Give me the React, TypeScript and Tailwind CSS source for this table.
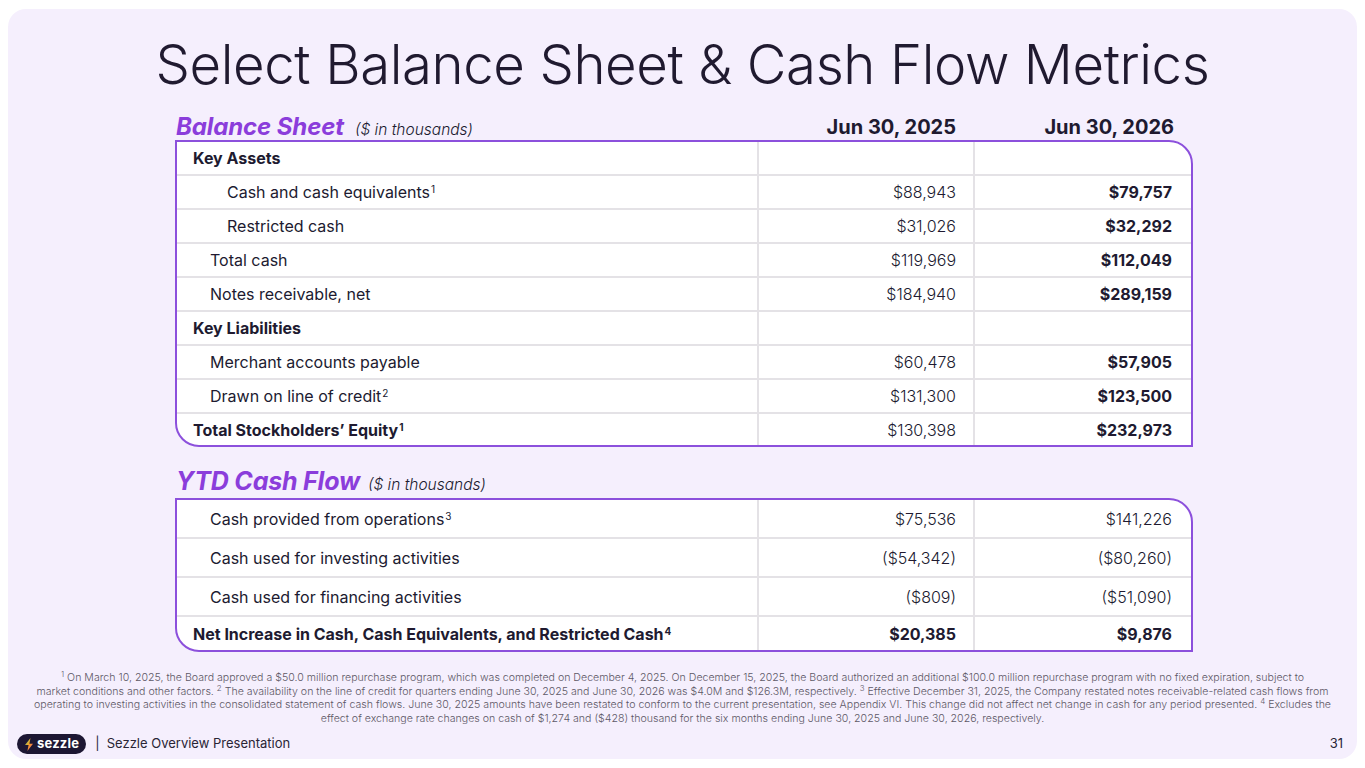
import React from "react";

type Row = {
  label: string;
  sup?: string;
  a: string;
  b: string;
  indent?: 0 | 1 | 2;
  bold?: boolean;
  boldA?: boolean;
  boldB?: boolean;
};

const balanceRows: Row[] = [
  { label: "Key Assets", a: "", b: "", indent: 0, bold: true },
  { label: "Cash and cash equivalents", sup: "1", a: "$88,943", b: "$79,757", indent: 2, boldB: true },
  { label: "Restricted cash", a: "$31,026", b: "$32,292", indent: 2, boldB: true },
  { label: "Total cash", a: "$119,969", b: "$112,049", indent: 1, boldB: true },
  { label: "Notes receivable, net", a: "$184,940", b: "$289,159", indent: 1, boldB: true },
  { label: "Key Liabilities", a: "", b: "", indent: 0, bold: true },
  { label: "Merchant accounts payable", a: "$60,478", b: "$57,905", indent: 1, boldB: true },
  { label: "Drawn on line of credit", sup: "2", a: "$131,300", b: "$123,500", indent: 1, boldB: true },
  { label: "Total Stockholders\u2019 Equity", sup: "1", a: "$130,398", b: "$232,973", indent: 0, bold: true, boldB: true },
];

const cashRows: Row[] = [
  { label: "Cash provided from operations", sup: "3", a: "$75,536", b: "$141,226", indent: 1 },
  { label: "Cash used for investing activities", a: "($54,342)", b: "($80,260)", indent: 1 },
  { label: "Cash used for financing activities", a: "($809)", b: "($51,090)", indent: 1 },
  { label: "Net Increase in Cash, Cash Equivalents, and Restricted Cash", sup: "4", a: "$20,385", b: "$9,876", indent: 0, bold: true, boldA: true, boldB: true },
];

function TableRow({ row, last, h }: { row: Row; last: boolean; h: string }) {
  const pad = row.indent === 2 ? "pl-[50px]" : row.indent === 1 ? "pl-[33px]" : "pl-[16px]";
  return (
    <div className={`grid grid-cols-[582px_216px_1fr] ${h} ${last ? "" : "border-b-2 border-[#e4e2e6]"}`}>
      <div className={`flex items-center ${pad} border-r-2 border-[#e4e2e6] ${row.bold ? "font-bold" : "font-normal"}`}>
        <span>
          {row.label}
          {row.sup && <sup className="text-[10px] leading-none ml-[1px]">{row.sup}</sup>}
        </span>
      </div>
      <div className={`flex items-center justify-end pr-[17px] border-r-2 border-[#e4e2e6] ${row.boldA ? "font-bold" : "font-light"}`}>
        {row.a}
      </div>
      <div className={`flex items-center justify-end pr-[19px] ${row.boldB ? "font-bold" : "font-light"}`}>
        {row.b}
      </div>
    </div>
  );
}

function SezzleLogo() {
  return (
    <div className="flex items-center gap-[3px] h-[20px] px-[7px] rounded-full bg-[#1d1733]">
      <svg width="10" height="13" viewBox="0 0 10 13">
        <defs>
          <linearGradient id="bolt" x1="0" y1="0" x2="1" y2="1">
            <stop offset="0" stopColor="#3ad6a8" />
            <stop offset="0.45" stopColor="#f5a623" />
            <stop offset="1" stopColor="#f0507a" />
          </linearGradient>
        </defs>
        <path d="M6.5 0 L1 7 L4.6 7 L3.4 13 L9 5.8 L5.4 5.8 Z" fill="url(#bolt)" />
      </svg>
      <span className="text-white text-[13px] font-bold leading-none tracking-[0.2px] -mt-[2px]">sezzle</span>
    </div>
  );
}

export default function App() {
  return (
    <div
      className="w-[1365px] h-[768px] bg-white py-[9px] px-[8px] text-[#201a30]"
      style={{ fontFamily: "Inter, 'Liberation Sans', sans-serif" }}
    >
      <div className="w-full h-[750px] rounded-[18px] bg-[#f5effd] flex flex-col">
        <h1 className="text-center text-[54.5px] font-light leading-none tracking-[-0.4px] pt-[28px] h-[100px]">
          Select Balance Sheet &amp; Cash Flow Metrics
        </h1>

        <div className="ml-[167px] w-[1018px]">
          {/* Balance sheet header */}
          <div className="grid grid-cols-[582px_216px_1fr] h-[31px] items-center">
            <div className="flex items-baseline gap-[11px] pl-[1px]">
              <span className="text-[#8b3ddb] text-[24px] font-bold italic tracking-[-0.1px]">Balance Sheet</span>
              <span className="text-[15.5px] italic font-light">($ in thousands)</span>
            </div>
            <div className="text-right pr-[17px] text-[20px] font-bold">Jun 30, 2025</div>
            <div className="text-right pr-[19px] text-[20px] font-bold">Jun 30, 2026</div>
          </div>

          <div className="border-2 border-[#8c50dc] rounded-tr-[24px] rounded-bl-[24px] bg-white text-[16px] overflow-hidden">
            {balanceRows.map((r, i) => (
              <TableRow key={r.label} row={r} last={i === balanceRows.length - 1} h={i === balanceRows.length - 1 ? "h-[31px]" : "h-[34px]"} />
            ))}
          </div>

          {/* Cash flow header */}
          <div className="flex items-baseline gap-[8px] h-[51px] pt-[16px] pl-[1px]">
            <span className="text-[#8b3ddb] text-[25px] font-bold italic tracking-[-0.2px]">YTD Cash Flow</span>
            <span className="text-[15.5px] italic font-light">($ in thousands)</span>
          </div>

          <div className="border-2 border-[#8c50dc] rounded-tr-[24px] rounded-bl-[24px] bg-white text-[16px] overflow-hidden">
            {cashRows.map((r, i) => (
              <TableRow key={r.label} row={r} last={i === cashRows.length - 1} h={i === cashRows.length - 1 ? "h-[33px]" : "h-[39px]"} />
            ))}
          </div>
        </div>

        <p className="mt-[19px] px-[12px] text-center text-[10.6px] leading-[13.7px] text-[#5d5866] font-light [&>sup]:leading-none">
          <sup>1</sup> On March 10, 2025, the Board approved a $50.0 million repurchase program, which was completed on December 4, 2025. On December 15, 2025, the Board authorized an additional $100.0 million repurchase program with no fixed expiration, subject to
          <br />
          market conditions and other factors. <sup>2</sup> The availability on the line of credit for quarters ending June 30, 2025 and June 30, 2026 was $4.0M and $126.3M, respectively. <sup>3</sup> Effective December 31, 2025, the Company restated notes receivable-related cash flows from
          <br />
          operating to investing activities in the consolidated statement of cash flows. June 30, 2025 amounts have been restated to conform to the current presentation, see Appendix VI. This change did not affect net change in cash for any period presented. <sup>4</sup> Excludes the
          <br />
          effect of exchange rate changes on cash of $1,274 and ($428) thousand for the six months ending June 30, 2025 and June 30, 2026, respectively.
        </p>

        <div className="mt-auto mb-[5px] flex items-center pl-[9px] pr-[14px] h-[20px]">
          <SezzleLogo />
          <span className="ml-[9px] text-[13px] text-[#2a2535]">|&nbsp;&nbsp;Sezzle Overview Presentation</span>
          <span className="ml-auto text-[13px] text-[#2a2535]">31</span>
        </div>
      </div>
    </div>
  );
}
